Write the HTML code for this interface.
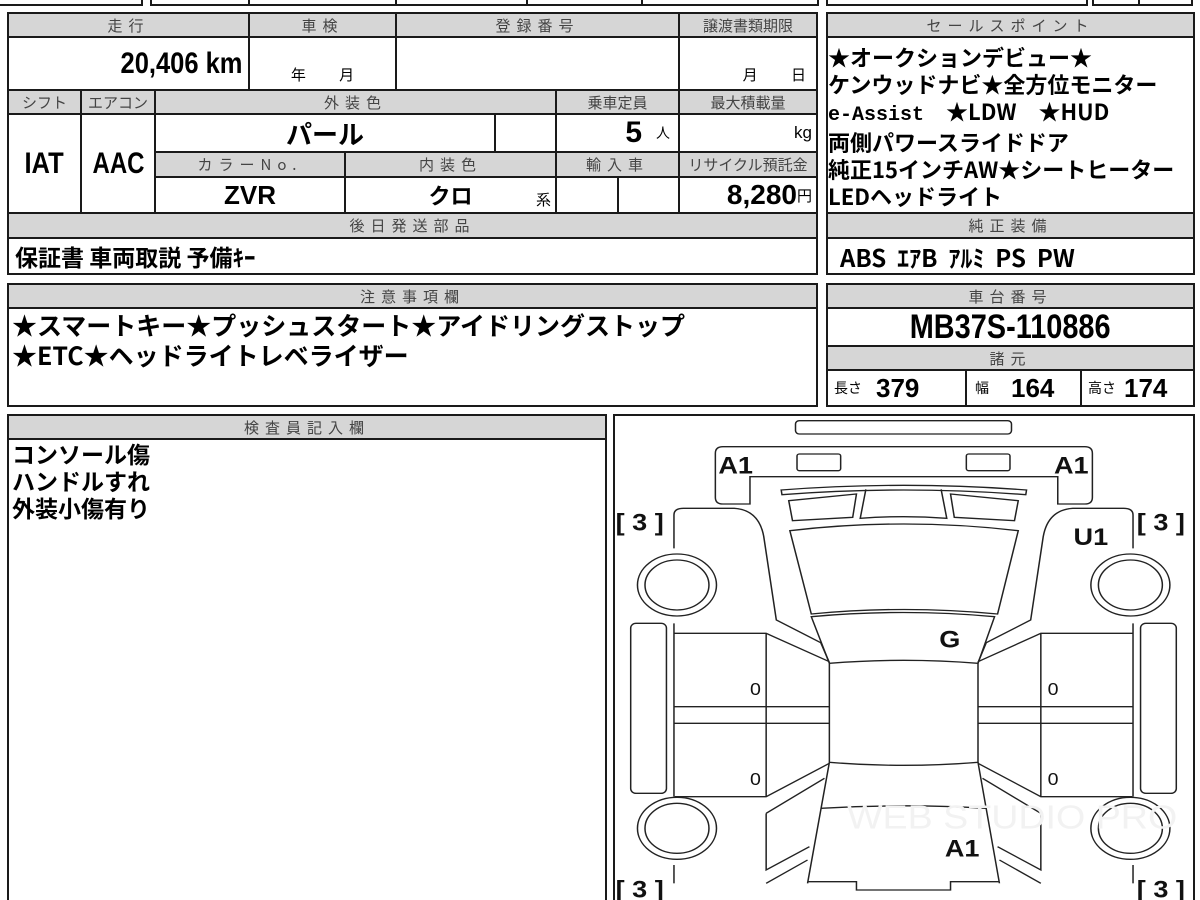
<!DOCTYPE html>
<html><head><meta charset="utf-8"><style>
html,body{margin:0;width:1200px;height:900px;overflow:hidden;background:#fff;position:relative;font-family:"Liberation Sans Narrow","Liberation Sans","Noto Sans CJK JP",sans-serif;}
.c{position:absolute;border:2px solid #1a1a1a;box-sizing:border-box;display:flex;align-items:center;justify-content:center;color:#000;font-weight:bold;overflow:hidden;white-space:nowrap}
.h{background:#d6d6d6;color:#444;font-weight:normal;font-size:15px;letter-spacing:6px;font-family:"Noto Sans CJK JP",sans-serif}
.h2{letter-spacing:0}
.j{font-family:"Liberation Sans Narrow","Noto Sans CJK JP",sans-serif}
.big{font-size:30px}
.t{position:absolute;font-weight:bold;font-family:"Noto Sans CJK JP",sans-serif;color:#000;white-space:nowrap}
</style></head><body>
<div class="c" style="left:-2px;top:-10px;width:145px;height:16px"></div>
<div class="c" style="left:150px;top:-10px;width:100px;height:16px"></div>
<div class="c" style="left:248px;top:-10px;width:149px;height:16px"></div>
<div class="c" style="left:395px;top:-10px;width:133px;height:16px"></div>
<div class="c" style="left:526px;top:-10px;width:117px;height:16px"></div>
<div class="c" style="left:641px;top:-10px;width:178px;height:16px"></div>
<div class="c" style="left:826px;top:-10px;width:262px;height:16px"></div>
<div class="c" style="left:1092px;top:-10px;width:48px;height:16px"></div>
<div class="c" style="left:1138px;top:-10px;width:55px;height:16px"></div>

<div class="c h" style="left:7px;top:12px;width:243px;height:26px">走行</div>
<div class="c h" style="left:248px;top:12px;width:149px;height:26px">車検</div>
<div class="c h" style="left:395px;top:12px;width:285px;height:26px">登録番号</div>
<div class="c h h2" style="left:678px;top:12px;width:140px;height:26px">譲渡書類期限</div>
<div class="c big" style="left:7px;top:36px;width:243px;height:55px;justify-content:flex-end;padding-right:6px"><span style="transform:scaleX(.85);transform-origin:right;display:inline-block">20,406 km</span></div>
<div class="c" style="left:248px;top:36px;width:149px;height:55px;align-items:flex-end;font-weight:normal;font-size:15px;font-family:'Noto Sans CJK JP';padding-bottom:4px">年　　 月</div>
<div class="c" style="left:395px;top:36px;width:285px;height:55px"></div>
<div class="c" style="left:678px;top:36px;width:140px;height:55px;align-items:flex-end;justify-content:flex-end;font-weight:normal;font-size:15px;font-family:'Noto Sans CJK JP';padding:0 10px 4px 0">月　　 日</div>

<div class="c h h2" style="left:7px;top:89px;width:75px;height:26px">シフト</div>
<div class="c h h2" style="left:80px;top:89px;width:76px;height:26px">エアコン</div>
<div class="c h" style="left:154px;top:89px;width:403px;height:26px">外装色</div>
<div class="c h h2" style="left:555px;top:89px;width:125px;height:26px">乗車定員</div>
<div class="c h h2" style="left:678px;top:89px;width:140px;height:26px">最大積載量</div>

<div class="c big" style="left:7px;top:113px;width:75px;height:101px"><span style="transform:scaleX(.85);display:inline-block">IAT</span></div>
<div class="c big" style="left:80px;top:113px;width:76px;height:101px"><span style="transform:scaleX(.8);display:inline-block">AAC</span></div>
<div class="c j" style="left:154px;top:113px;width:342px;height:40px;font-size:26px">パール</div>
<div class="c" style="left:494px;top:113px;width:63px;height:40px"></div>
<div class="c" style="left:555px;top:113px;width:125px;height:40px;justify-content:flex-end;padding-right:8px;font-size:30px">5<span style="font-size:14px;font-weight:normal;margin-left:14px">人</span></div>
<div class="c" style="left:678px;top:113px;width:140px;height:40px;justify-content:flex-end;padding-right:4px;font-size:17px;font-weight:normal">kg</div>

<div class="c h" style="left:154px;top:151px;width:192px;height:27px">カラーNo.</div>
<div class="c h" style="left:344px;top:151px;width:213px;height:27px">内装色</div>
<div class="c h" style="left:555px;top:151px;width:125px;height:27px">輸入車</div>
<div class="c h h2" style="left:678px;top:151px;width:140px;height:27px">リサイクル預託金</div>
<div class="c" style="left:154px;top:176px;width:192px;height:38px;font-size:26px">ZVR</div>
<div class="c j" style="left:344px;top:176px;width:213px;height:38px;font-size:22px">クロ<span style="position:absolute;right:4px;bottom:2px;font-size:15px;font-weight:normal">系</span></div>
<div class="c" style="left:555px;top:176px;width:64px;height:38px"></div>
<div class="c" style="left:617px;top:176px;width:63px;height:38px"></div>
<div class="c" style="left:678px;top:176px;width:140px;height:38px;justify-content:flex-end;padding-right:4px;font-size:28px">8,280<span style="font-size:15px;font-weight:normal">円</span></div>

<div class="c h" style="left:7px;top:212px;width:811px;height:27px">後日発送部品</div>
<div class="c j" style="left:7px;top:237px;width:811px;height:38px;justify-content:flex-start;padding-left:6px;font-size:23px">保証書 車両取説 予備ｷｰ</div>

<div class="c h" style="left:826px;top:12px;width:369px;height:26px">セールスポイント</div>
<div class="c" style="left:826px;top:36px;width:369px;height:178px"></div>
<div class="t" style="left:828px;top:44px;font-size:22px;line-height:27px">★オークションデビュー★<br>ケンウッドナビ★全方位モニター<br><span style="font-family:'Liberation Mono';font-size:20px">e-Assist</span>　★LDW　★HUD<br>両側パワースライドドア<br>純正15インチAW★シートヒーター<br>LEDヘッドライト</div>
<div class="c h" style="left:826px;top:212px;width:369px;height:27px">純正装備</div>
<div class="c j" style="left:826px;top:237px;width:369px;height:38px;justify-content:flex-start;padding-left:12px;font-size:24px">ABS&nbsp; ｴｱB&nbsp; ｱﾙﾐ&nbsp; PS&nbsp; PW</div>

<div class="c h" style="left:826px;top:283px;width:369px;height:26px">車台番号</div>
<div class="c" style="left:826px;top:307px;width:369px;height:40px;font-size:34px"><span style="transform:scaleX(.85);display:inline-block">MB37S-110886</span></div>
<div class="c h" style="left:826px;top:345px;width:369px;height:26px">諸元</div>
<div class="c" style="left:826px;top:369px;width:141px;height:38px;justify-content:flex-start;padding-left:6px;font-size:26px"><span style="font-size:14px;font-weight:normal;font-family:'Noto Sans CJK JP';margin-right:14px">長さ</span>379</div>
<div class="c" style="left:965px;top:369px;width:117px;height:38px;justify-content:flex-start;padding-left:8px;font-size:26px"><span style="font-size:14px;font-weight:normal;font-family:'Noto Sans CJK JP';margin-right:22px">幅</span>164</div>
<div class="c" style="left:1080px;top:369px;width:115px;height:38px;justify-content:flex-start;padding-left:6px;font-size:26px"><span style="font-size:14px;font-weight:normal;font-family:'Noto Sans CJK JP';margin-right:8px">高さ</span>174</div>

<div class="c h" style="left:7px;top:283px;width:811px;height:26px">注意事項欄</div>
<div class="c" style="left:7px;top:307px;width:811px;height:100px"></div>
<div class="t" style="left:12px;top:310px;font-size:25px;line-height:30px">★スマートキー★プッシュスタート★アイドリングストップ<br>★ETC★ヘッドライトレベライザー</div>

<div class="c h" style="left:7px;top:414px;width:600px;height:26px">検査員記入欄</div>
<div class="c" style="left:7px;top:438px;width:600px;height:470px;border-bottom:none"></div>
<div class="t" style="left:12px;top:440px;font-size:23px;line-height:27px">コンソール傷<br>ハンドルすれ<br>外装小傷有り</div>

<div class="c" style="left:613px;top:414px;width:582px;height:494px;border-bottom:none"></div>
<svg style="position:absolute;left:610px;top:410px" width="590" height="490" viewBox="0 0 1568 1470" preserveAspectRatio="none" fill="none" stroke="#222" stroke-width="4">
<rect x="493" y="32" width="574" height="40" rx="10"/>
<path d="M300,110 H1262 Q1282,110 1282,130 V262 Q1282,282 1262,282 H1190 V200 H372 V282 H300 Q280,282 280,262 V130 Q280,110 300,110 Z"/>
<rect x="497" y="132" width="116" height="50" rx="6"/>
<rect x="947" y="132" width="116" height="50" rx="6"/>
<path d="M455,240 Q780,212 1107,240 L1105,254 Q780,226 457,254 Z"/>
<path d="M475,272 L655,252 L645,322 L485,332Z"/>
<path d="M905,252 L1085,272 L1075,332 L915,322Z"/>
<path d="M680,238 L665,325 Q780,315 895,325 L880,238"/>
<path d="M478,362 Q780,322 1085,362 L1030,612 Q780,585 535,612 Z"/>
<path d="M535,620 Q780,595 1022,620 L978,760 Q780,742 583,760 Z"/>
<path d="M583,760 V1057 Q780,1075 978,1057 V760"/>
<path d="M560,1195 Q780,1180 1000,1195"/>
<path d="M583,1057 L525,1420 M978,1057 L1035,1420"/>
<path d="M527,1415 H655 V1440 H905 V1415 H1033"/>
<path d="M170,415 V315 Q170,295 195,295 H330 Q400,300 410,390 L442,630 L560,698 L583,758"/>
<path d="M170,640 V1160 M172,670 H415 L583,755 M172,890 H583 M172,940 H583 M172,1160 H415 L583,1060 M415,670 V1160"/>
<path d="M415,1210 L570,1105 M415,1210 V1380 L530,1310 M415,1420 L525,1350"/>
<path d="M170,1365 V1420"/>
<path d="M1390,415 V315 Q1390,295 1365,295 H1230 Q1160,300 1150,390 L1118,630 L1000,698 L978,758"/>
<path d="M1390,640 V1160 M1388,670 H1145 L978,755 M1388,890 H978 M1388,940 H978 M1388,1160 H1145 L978,1060 M1145,670 V1160"/>
<path d="M1145,1210 L990,1105 M1145,1210 V1380 L1030,1310 M1145,1420 L1035,1350"/>
<path d="M1390,1365 V1420"/>
<rect x="55" y="640" width="95" height="510" rx="14"/>
<rect x="1410" y="640" width="95" height="510" rx="14"/>
<ellipse cx="178" cy="525" rx="105" ry="93"/><ellipse cx="178" cy="525" rx="85" ry="75"/>
<ellipse cx="178" cy="1255" rx="105" ry="93"/><ellipse cx="178" cy="1255" rx="85" ry="75"/>
<ellipse cx="1383" cy="525" rx="105" ry="93"/><ellipse cx="1383" cy="525" rx="85" ry="75"/>
<ellipse cx="1383" cy="1255" rx="105" ry="93"/><ellipse cx="1383" cy="1255" rx="85" ry="75"/>
<g stroke="none" fill="#111" font-family="Liberation Sans Narrow, Liberation Sans, sans-serif" font-weight="bold" font-size="72">
<text x="288" y="190">A1</text><text x="1180" y="190">A1</text>
<text x="1232" y="405">U1</text><text x="875" y="712">G</text>
<text x="890" y="1340">A1</text>
<text x="15" y="362">[ 3 ]</text>
<text x="1400" y="362">[ 3 ]</text>
<text x="15" y="1462">[ 3 ]</text>
<text x="1400" y="1462">[ 3 ]</text>
<text x="372" y="855" font-size="52" font-weight="normal">0</text>
<text x="372" y="1125" font-size="52" font-weight="normal">0</text>
<text x="1163" y="855" font-size="52" font-weight="normal">0</text>
<text x="1163" y="1125" font-size="52" font-weight="normal">0</text>
<text x="630" y="1255" font-size="100" font-weight="normal" fill="#f2f2f2">WEB STUDIO PRO</text>
</g>
</svg>
</body></html>
